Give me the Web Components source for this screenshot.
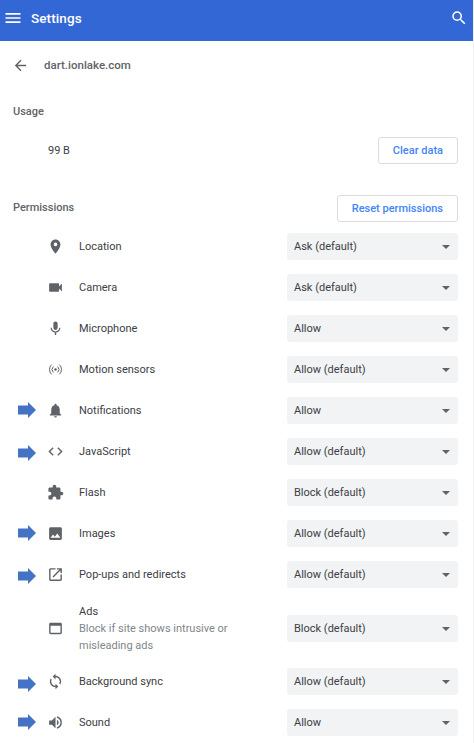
<!DOCTYPE html>
<html>
<head>
<meta charset="utf-8">
<title>Settings</title>
<style>
  html, body { margin: 0; background: #fff; }
  body { font-family: Roboto, "Liberation Sans", sans-serif; color: #3c4043; overflow: hidden; }
  svg { display: block; width: 100%; height: 100%; fill: currentColor; }
</style>
</head>
<body>

<settings-app>
  <settings-header title="Settings"></settings-header>
  <site-details site="dart.ionlake.com" usage="99 B">
    <perm-row label="Location" value="Ask (default)">
      <svg slot="icon" viewBox="0 0 24 24"><path d="M12 2C8.13 2 5 5.13 5 9c0 5.25 7 13 7 13s7-7.75 7-13c0-3.87-3.13-7-7-7zm0 9.5a2.5 2.5 0 0 1 0-5 2.5 2.5 0 0 1 0 5z"/></svg>
    </perm-row>
    <perm-row label="Camera" value="Ask (default)">
      <svg slot="icon" viewBox="0 0 24 24"><path d="M17 10.5V7c0-.55-.45-1-1-1H4c-.55 0-1 .45-1 1v10c0 .55.45 1 1 1h12c.55 0 1-.45 1-1v-3.5l4 4v-11l-4 4z"/></svg>
    </perm-row>
    <perm-row label="Microphone" value="Allow">
      <svg slot="icon" viewBox="0 0 24 24"><path d="M12 14c1.66 0 2.99-1.34 2.99-3L15 5c0-1.66-1.34-3-3-3S9 3.34 9 5v6c0 1.66 1.34 3 3 3zm5.3-3c0 3-2.54 5.1-5.3 5.1S6.7 14 6.7 11H5c0 3.41 2.72 6.23 6 6.72V21h2v-3.28c3.28-.48 6-3.3 6-6.72h-1.7z"/></svg>
    </perm-row>
    <perm-row label="Motion sensors" value="Allow (default)">
      <svg slot="icon" viewBox="0 0 24 24"><circle cx="12" cy="12" r="1.8"/><g fill="none" stroke="currentColor" stroke-width="1.4" stroke-linecap="round"><path d="M8.6 8.2a5.4 5.4 0 0 0 0 7.6"/><path d="M15.4 8.2a5.4 5.4 0 0 1 0 7.6"/><path d="M6 5.6a9 9 0 0 0 0 12.8"/><path d="M18 5.6a9 9 0 0 1 0 12.8"/></g></svg>
    </perm-row>
    <perm-row label="Notifications" value="Allow" arrow="-1">
      <svg slot="icon" viewBox="0 0 24 24"><path d="M12 22c1.1 0 2-.9 2-2h-4c0 1.1.9 2 2 2zm6-6v-5c0-3.07-1.63-5.64-4.5-6.32V4c0-.83-.67-1.5-1.5-1.5s-1.5.67-1.5 1.5v.68C7.64 5.36 6 7.92 6 11v5l-2 2v1h16v-1l-2-2z"/></svg>
    </perm-row>
    <perm-row label="JavaScript" value="Allow (default)" arrow="1">
      <svg slot="icon" viewBox="0 0 24 24"><path d="M9.4 16.6L4.8 12l4.6-4.6L8 6l-6 6 6 6 1.4-1.4zm5.2 0l4.6-4.6-4.6-4.6L16 6l6 6-6 6-1.4-1.4z"/></svg>
    </perm-row>
    <perm-row label="Flash" value="Block (default)">
      <svg slot="icon" viewBox="0 0 24 24"><path d="M20.5 11H19V7c0-1.1-.9-2-2-2h-4V3.5C13 2.12 11.88 1 10.5 1S8 2.12 8 3.5V5H4c-1.1 0-1.99.9-1.99 2v3.8H3.5c1.49 0 2.7 1.21 2.7 2.7s-1.21 2.7-2.7 2.7H2V20c0 1.1.9 2 2 2h3.8v-1.5c0-1.49 1.21-2.7 2.7-2.7 1.49 0 2.7 1.21 2.7 2.7V22H17c1.1 0 2-.9 2-2v-4h1.5c1.38 0 2.5-1.12 2.5-2.5S21.88 11 20.5 11z"/></svg>
    </perm-row>
    <perm-row label="Images" value="Allow (default)" arrow="-1">
      <svg slot="icon" viewBox="0 0 24 24"><path d="M21 19V5c0-1.1-.9-2-2-2H5c-1.1 0-2 .9-2 2v14c0 1.1.9 2 2 2h14c1.1 0 2-.9 2-2zM8.5 13.5l2.5 3.01L14.5 12l4.5 6H5l3.5-4.5z"/></svg>
    </perm-row>
    <perm-row label="Pop-ups and redirects" value="Allow (default)" arrow="1">
      <svg slot="icon" viewBox="0 0 24 24"><path d="M19 19H5V5h7V3H5c-1.11 0-2 .9-2 2v14c0 1.1.89 2 2 2h14c1.1 0 2-.9 2-2v-7h-2v7zM14 3v2h3.59l-9.83 9.83 1.41 1.41L19 6.41V10h2V3h-7z"/></svg>
    </perm-row>
    <perm-row label="Ads" value="Block (default)" tall>
      <svg slot="icon" viewBox="0 0 24 24"><path d="M19 4H5c-1.11 0-2 .9-2 2v12c0 1.1.89 2 2 2h14c1.1 0 2-.9 2-2V6c0-1.1-.89-2-2-2zm0 14H5V8h14v10z"/></svg>
      <span slot="desc">Block if site shows intrusive or misleading ads</span>
    </perm-row>
    <perm-row label="Background sync" value="Allow (default)" arrow="2">
      <svg slot="icon" viewBox="0 0 24 24"><path d="M12 4V1L8 5l4 4V6c3.31 0 6 2.69 6 6 0 1.01-.25 1.97-.7 2.8l1.46 1.46C19.54 15.03 20 13.57 20 12c0-4.42-3.58-8-8-8zm0 14c-3.31 0-6-2.69-6-6 0-1.01.25-1.97.7-2.8L5.24 7.74C4.46 8.97 4 10.43 4 12c0 4.42 3.58 8 8 8v3l4-4-4-4v3z"/></svg>
    </perm-row>
    <perm-row label="Sound" value="Allow" arrow="-1">
      <svg slot="icon" viewBox="0 0 24 24"><path d="M3 9v6h4l5 5V4L7 9H3zm13.5 3c0-1.77-1.02-3.29-2.5-4.03v8.05c1.48-.73 2.5-2.25 2.5-4.02zM14 3.23v2.06c2.89.86 5 3.54 5 6.71s-2.11 5.85-5 6.71v2.06c4.01-.91 7-3.74 7-8.77s-2.99-7.86-7-8.77z"/></svg>
    </perm-row>
  </site-details>
</settings-app>

<script>
class SettingsApp extends HTMLElement {
  constructor() {
    super();
    this.attachShadow({ mode: 'open' }).innerHTML = `
      <style>
        :host { display: block; height: 743px; overflow: hidden; border-right: 1px solid #f1f1f1; box-sizing: border-box; }
      </style>
      <slot></slot>`;
  }
}

class SettingsHeader extends HTMLElement {
  constructor() {
    super();
    this.attachShadow({ mode: 'open' }).innerHTML = `
      <style>
        :host { display: flex; align-items: center; height: 41px; margin-right: -1px; background: #3367d6; color: #fff; padding: 0 6px 5px 3px; box-sizing: border-box; }
        .menu { width: 20px; height: 20px; }
        h1 { flex: 1; margin: 0 0 0 8px; font-size: 13.5px; font-weight: 500; letter-spacing: .1px; }
        .search { width: 18px; height: 18px; }
        svg { display: block; width: 100%; height: 100%; fill: currentColor; }
      </style>
      <div class="menu"><svg viewBox="0 0 24 24"><path d="M3 18h18v-2H3v2zm0-5h18v-2H3v2zm0-7v2h18V6H3z"/></svg></div>
      <h1></h1>
      <div class="search"><svg viewBox="0 0 24 24"><path d="M15.5 14h-.79l-.28-.27A6.471 6.471 0 0 0 16 9.5 6.5 6.5 0 1 0 9.5 16c1.61 0 3.09-.59 4.23-1.57l.27.28v.79l5 4.99L20.49 19l-4.99-5zm-6 0C7.01 14 5 11.99 5 9.5S7.01 5 9.5 5 14 7.01 14 9.5 11.99 14 9.5 14z"/></svg></div>`;
    this.shadowRoot.querySelector('h1').textContent = this.getAttribute('title');
  }
}

class OutlineButton extends HTMLElement {
  constructor() {
    super();
    this.attachShadow({ mode: 'open' }).innerHTML = `
      <style>
        :host { display: inline-flex; align-items: center; justify-content: center; height: 27px; box-sizing: border-box; border: 1px solid #dadce0; border-radius: 3px; padding: 0 14px; font-size: 11px; font-weight: 500; color: #4285f4; background: #fff; }
      </style>
      <slot></slot>`;
  }
}

class SiteDetails extends HTMLElement {
  constructor() {
    super();
    this.attachShadow({ mode: 'open' }).innerHTML = `
      <style>
        :host { display: block; padding: 0 15px 0 13px; font-size: 11px; }
        .site { display: flex; align-items: center; height: 48px; font-size: 11.5px; font-weight: 500; color: #5f6368; }
        .back { width: 17px; height: 17px; margin: 0 15px 0 -1px; }
        .back svg { display: block; width: 100%; height: 100%; fill: currentColor; }
        .label { font-weight: 500; color: #5f6368; }
        .usage-head { margin-top: 16px; line-height: 13px; }
        .usage { display: flex; align-items: center; justify-content: space-between; margin-top: 19px; padding-left: 35px; color: #3c4043; }
        .perm-head { display: flex; align-items: center; justify-content: space-between; margin-top: 31px; margin-bottom: 4px; }
        .perm-head .label { margin-bottom: 2px; }
      </style>
      <div class="site"><div class="back"><svg viewBox="0 0 24 24"><path d="M20 11H7.83l5.59-5.59L12 4l-8 8 8 8 1.41-1.41L7.83 13H20v-2z"/></svg></div><span id="site"></span></div>
      <div class="label usage-head">Usage</div>
      <div class="usage"><span id="usage"></span><outline-button>Clear data</outline-button></div>
      <div class="perm-head"><span class="label">Permissions</span><outline-button>Reset permissions</outline-button></div>
      <slot></slot>`;
    this.shadowRoot.getElementById('site').textContent = this.getAttribute('site');
    this.shadowRoot.getElementById('usage').textContent = this.getAttribute('usage');
  }
}

class PermSelect extends HTMLElement {
  constructor() {
    super();
    this.attachShadow({ mode: 'open' }).innerHTML = `
      <style>
        :host { display: flex; align-items: center; justify-content: space-between; width: 171px; height: 27px; box-sizing: border-box; flex: none; padding: 0 8px 0 7px; background: #f1f3f4; border-radius: 3px; font-size: 11px; color: #3c4043; }
        i { width: 0; height: 0; border: 4px solid transparent; border-top: 4px solid #5f6368; border-bottom: 0; margin-top: 1px; }
      </style>
      <slot></slot><i></i>`;
  }
}

class PermRow extends HTMLElement {
  constructor() {
    super();
    this.attachShadow({ mode: 'open' }).innerHTML = `
      <style>
        :host { display: flex; align-items: center; position: relative; height: 41px; padding-left: 34px; font-size: 11px; color: #3c4043; }
        :host([tall]) { height: 66px; }
        .icon { flex: none; width: 17px; height: 17px; margin-right: 15px; color: #5f6368; }
        .text { flex: 1; min-width: 0; padding-right: 40px; }
        .desc { color: #80868b; line-height: 17px; }
        .label { line-height: 17px; }
        .arrow { position: absolute; left: 5px; top: 50%; width: 18px; height: 16px; margin-top: calc(-8px + var(--nudge, 0px)); display: none; }
        :host([arrow]) .arrow { display: block; }
        .arrow svg { display: block; width: 18px; height: 16px; fill: #4472c4; }
      </style>
      <div class="arrow"><svg viewBox="0 0 18 16"><path d="M0 3.5h10V0l8 8-8 8v-3.5H0z"/></svg></div>
      <div class="icon"><slot name="icon"></slot></div>
      <div class="text"><div class="label"></div><div class="desc"><slot name="desc"></slot></div></div>
      <perm-select></perm-select>`;
    this.shadowRoot.querySelector('.label').textContent = this.getAttribute('label');
    this.shadowRoot.querySelector('perm-select').textContent = this.getAttribute('value');
    if (this.hasAttribute('arrow')) this.style.setProperty('--nudge', this.getAttribute('arrow') + 'px');
  }
}

customElements.define('settings-app', SettingsApp);
customElements.define('settings-header', SettingsHeader);
customElements.define('outline-button', OutlineButton);
customElements.define('site-details', SiteDetails);
customElements.define('perm-select', PermSelect);
customElements.define('perm-row', PermRow);
</script>
</body>
</html>
